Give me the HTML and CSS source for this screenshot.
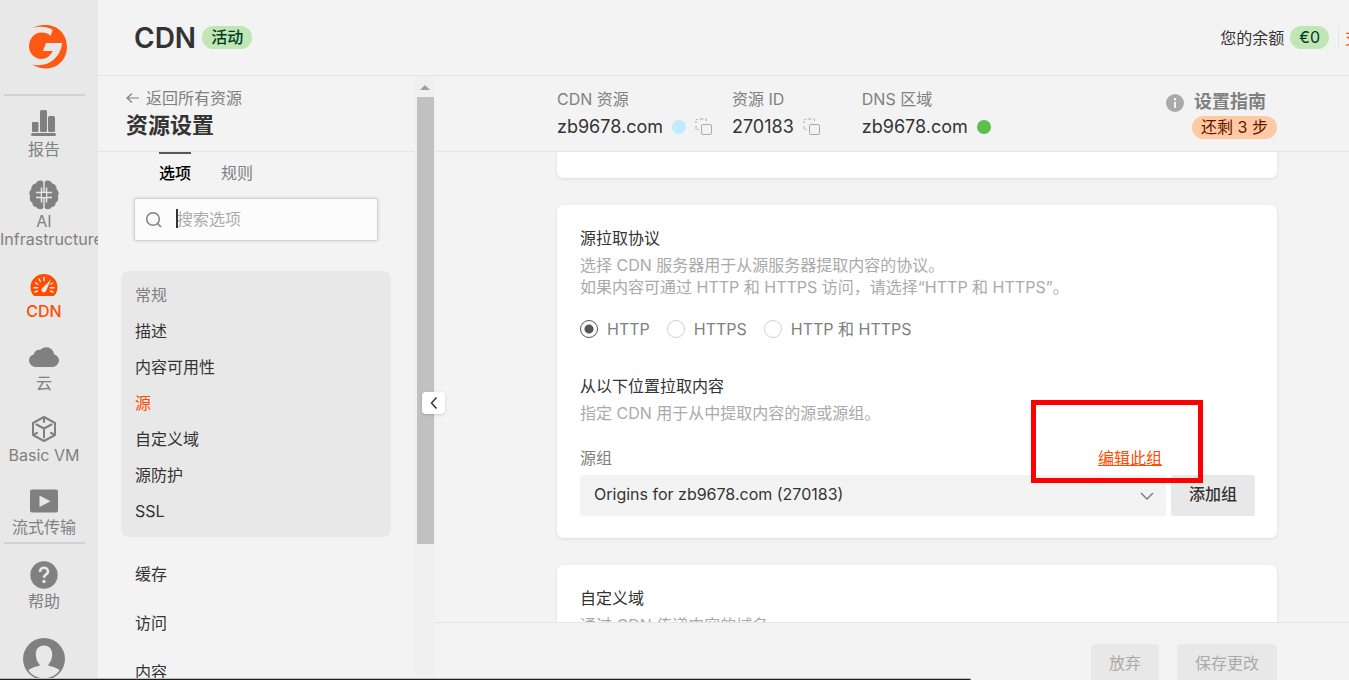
FILE: index.html
```html
<!DOCTYPE html>
<html lang="zh-CN">
<head>
<meta charset="utf-8">
<meta name="viewport" content="width=device-width, initial-scale=1">
<title>CDN 资源设置</title>
<link rel="stylesheet" href="styles.css">
</head>
<body>
<div class="app">
  <aside class="rail">
    <a class="logo" href="#" aria-label="首页">
      <svg width="38" height="44" viewBox="-1 0 38 44">
        <path fill="#ff5913" d="M2.500 3C8 .3 12 0 16 0c12 0 21 9.600 21 21.700S28 43.500 16 43.500c-5 0-9.500-1.300-13.500-4C17 43 30 34 32.300 18H16l-3 8h9.700c-2.200 5-6.500 8-11.200 8C4.500 34-1 28.500-1 21S4.500 7.500 11.500 7.500c3.500 0 6.700 1.200 9.200 3.200l2-5.700C17 1.500 9 1 2.500 3z"/>
      </svg>
    </a>
    <hr class="rail-line">
    <nav class="rail-nav">
      <a class="rail-item" href="#">
        <span class="rail-icon"><svg width="26" height="26" viewBox="0 0 26 26" fill="#808080"><rect x="1" y="12" width="6.500" height="10" rx="1"/><rect x="9" y="0" width="7" height="22" rx="1.500"/><rect x="17" y="6" width="7" height="16" rx="1.500"/><rect x="0" y="23" width="25" height="3" rx="1.500"/></svg></span>
        <span class="rail-label">报告</span>
      </a>
      <a class="rail-item" href="#">
        <span class="rail-icon"><svg width="30" height="30" viewBox="0 0 30 30"><path fill="#808080" d="M14.300 2v26c-2 2-5.500 1.500-7-1C5 27 3.200 25.200 3.400 22.800 1 21.500 0 18.500 1.300 16.300-.3 14 .2 11 2.300 9.500 2 6.500 4 4 6.800 3.600 8.300.3 12.300-.3 14.300 2zM15.700 2v26c2 2 5.500 1.500 7-1 2.300 0 4.100-1.800 3.900-4.200 2.400-1.300 3.400-4.300 2.100-6.500 1.600-2.300 1.100-5.300-1-6.800.3-3-1.700-5.500-4.500-5.900-1.500-3.300-5.500-3.900-7.500-1.600z"/><path fill="none" stroke="#e8e8e8" stroke-width="1.500" d="M7 12.500h16M7 17.500h16M12.500 7.500v15M17.500 7.500v15"/><path fill="#808080" d="M13 13h4v4h-4z"/></svg></span>
        <span class="rail-label">AI Infrastructure</span>
      </a>
      <a class="rail-item active" href="#">
        <span class="rail-icon"><svg width="28" height="24" viewBox="0 0 28 24"><path fill="#ff4c00" d="M14 1C6.500 1 .5 7 .5 14.200c0 3 1 5.800 2.800 8 .4.500 1 .8 1.600.8h18.200c.6 0 1.200-.3 1.600-.8 1.800-2.200 2.800-5 2.800-8C27.500 7 21.500 1 14 1z"/><path stroke="#e8e8e8" stroke-width="1.500" stroke-linecap="round" d="M14 4.500v3M9 6l1.300 2.500M5.500 9.800l2.300 1.500M4 14.700h3.500M24 14.700h-3.500M5 19l2.500-1M23 19l-2.500-1M22.500 10l-1.500 1"/><path fill="#e8e8e8" d="M21 6.500l-4.800 11a2.400 2.400 0 1 1-3.800-2.500z"/></svg></span>
        <span class="rail-label">CDN</span>
      </a>
      <a class="rail-item" href="#">
        <span class="rail-icon"><svg width="30" height="20" viewBox="0 0 30 20"><path fill="#808080" d="M6.500 20a6.500 6.500 0 0 1-1.600-12.800A5 5 0 0 1 11 3 8 8 0 0 1 25 7.200 6.500 6.500 0 0 1 23.500 20z"/></svg></span>
        <span class="rail-label">云</span>
      </a>
      <a class="rail-item" href="#">
        <span class="rail-icon"><svg width="26" height="28" viewBox="0 0 26 28" fill="none" stroke="#808080" stroke-width="2" stroke-linejoin="round" stroke-linecap="round"><path d="M13 2l11 6v12l-11 6-11-6V8zM13 13.500v9M13 13.500L5.500 9.500M13 13.500l7.500-4M13 2v5M2 20l4-2.200M24 20l-4-2.200"/></svg></span>
        <span class="rail-label">Basic VM</span>
      </a>
      <a class="rail-item" href="#">
        <span class="rail-icon"><svg width="28" height="24" viewBox="0 0 28 24"><rect y=".5" width="28" height="23" rx="2" fill="#808080"/><path fill="#e8e8e8" d="M9.500 6.500v11.500l11-5.700z"/></svg></span>
        <span class="rail-label">流式传输</span>
      </a>
    </nav>
    <hr class="rail-line">
    <nav class="rail-nav rail-foot">
      <a class="rail-item" href="#">
        <span class="rail-icon"><svg width="28" height="28" viewBox="0 0 28 28"><circle cx="14" cy="14" r="13.700" fill="#808080"/><path d="M10 11c0-5.500 8-5.500 8-.6 0 3.200-4 3.200-4 6.400" fill="none" stroke="#e8e8e8" stroke-width="2.600"/><circle cx="14" cy="20.500" r="1.700" fill="#e8e8e8"/></svg></span>
        <span class="rail-label">帮助</span>
      </a>
      <a class="avatar" href="#" aria-label="账户"><svg width="42" height="42" viewBox="0 0 42 42"><circle cx="21" cy="21" r="21" fill="#808080"/><path fill="#e8e8e8" d="M21 7.500c5.500 0 8.500 4 8.200 9.500-.2 4-1.500 7.200-3.700 9.300v1.400c4.500 1 8.500 2.300 11.300 4.500A19.500 19.500 0 0 1 5.200 32.200C8 30 12 28.700 16.500 27.700v-1.400c-2.200-2.100-3.500-5.300-3.700-9.300C12.500 11.500 15.500 7.500 21 7.500z"/></svg></a>
    </nav>
  </aside>

  <div class="main">
    <header class="topbar">
      <h1>CDN</h1>
      <span class="pill pill-green">活动</span>
      <div class="balance">
        <span>您的余额</span>
        <span class="pill pill-green">€0</span>
        <a class="pay" href="#">支付</a>
      </div>
    </header>

    <div class="workspace">
      <section class="pane">
        <div class="pane-scroll">
          <div class="pane-head">
            <a class="back" href="#"><svg width="14" height="12" viewBox="0 0 14 12" fill="none" stroke="#808080" stroke-width="1.200"><path d="M13 6H1M6 1.500L1 6l5 4.500"/></svg>返回所有资源</a>
            <h2>资源设置</h2>
          </div>
          <div class="tabs">
            <button class="tab selected" type="button">选项</button>
            <button class="tab" type="button">规则</button>
          </div>
          <div class="search">
            <svg width="18" height="18" viewBox="0 0 18 18" fill="none" stroke="#808080" stroke-width="1.500"><circle cx="8" cy="8" r="6.300"/><path d="M12.500 12.500l3.500 3.500"/></svg>
            <input type="text" placeholder="搜索选项" aria-label="搜索选项">
            <span class="caret"></span>
          </div>
          <nav class="group">
            <span class="group-title">常规</span>
            <a href="#">描述</a>
            <a href="#">内容可用性</a>
            <a class="current" href="#">源</a>
            <a href="#">自定义域</a>
            <a href="#">源防护</a>
            <a href="#">SSL</a>
          </nav>
          <nav class="sections">
            <a href="#">缓存</a>
            <a href="#">访问</a>
            <a href="#">内容</a>
          </nav>
        </div>
        <div class="scrollbar"><span class="arrow-up"></span><span class="thumb"></span></div>
        <button class="collapse" type="button" aria-label="收起"><svg width="8" height="14" viewBox="0 0 8 14" fill="none" stroke="#333" stroke-width="1.500"><path d="M6.500 1.500L1.500 7l5 5.500"/></svg></button>
      </section>

      <section class="content">
        <div class="summary">
          <dl>
            <div><dt>CDN 资源</dt><dd>zb9678.com <i class="dot dot-blue"></i>
              <button class="copy" type="button" aria-label="复制"><svg width="18" height="18" viewBox="0 0 18 18" fill="none" stroke="#aaa"><rect x="6.500" y="6.500" width="10" height="10" rx="1.500"/><path d="M1 11V8M1 5V3M1 1.500h1.500M4.500 1h4M10.500 1h1v2M2 11.500h1.500"/></svg></button></dd></div>
            <div><dt>资源 ID</dt><dd>270183
              <button class="copy" type="button" aria-label="复制"><svg width="18" height="18" viewBox="0 0 18 18" fill="none" stroke="#aaa"><rect x="6.500" y="6.500" width="10" height="10" rx="1.500"/><path d="M1 11V8M1 5V3M1 1.500h1.500M4.500 1h4M10.500 1h1v2M2 11.500h1.500"/></svg></button></dd></div>
            <div><dt>DNS 区域</dt><dd>zb9678.com <i class="dot dot-green"></i></dd></div>
          </dl>
          <div class="guide">
            <svg width="18" height="18" viewBox="0 0 18 18"><circle cx="9" cy="9" r="9" fill="#aaa"/><path fill="#f3f3f3" d="M8 4h2v2.500H8zM8 8h2v6H8z"/></svg>
            <div><strong>设置指南</strong><span class="pill pill-peach">还剩 3 步</span></div>
          </div>
        </div>

        <div class="cards">
          <div class="card card-prev"></div>
          <form class="card">
            <h3>源拉取协议</h3>
            <p>选择 CDN 服务器用于从源服务器提取内容的协议。<br>如果内容可通过 HTTP 和 HTTPS 访问，请选择“HTTP 和 HTTPS”。</p>
            <div class="radios">
              <label><input type="radio" name="protocol" checked>HTTP</label>
              <label><input type="radio" name="protocol">HTTPS</label>
              <label><input type="radio" name="protocol">HTTP 和 HTTPS</label>
            </div>
            <h3>从以下位置拉取内容</h3>
            <p>指定 CDN 用于从中提取内容的源或源组。</p>
            <div class="origin">
              <div class="field">
                <div class="field-head"><label for="origin-group">源组</label><a href="#">编辑此组</a></div>
                <div class="select-box">
                  <select id="origin-group"><option>Origins for zb9678.com (270183)</option></select>
                  <svg width="14" height="8" viewBox="0 0 14 8" fill="none" stroke="#808080" stroke-width="1.500"><path d="M1 1l6 6 6-6"/></svg>
                </div>
              </div>
              <button class="btn" type="button">添加组</button>
            </div>
            <span class="highlight"></span>
          </form>
          <div class="card">
            <h3>自定义域</h3>
            <p>通过 CDN 传递内容的域名。</p>
          </div>
        </div>

        <footer class="actions">
          <button class="btn" type="button" disabled>放弃</button>
          <button class="btn" type="button" disabled>保存更改</button>
        </footer>
      </section>
    </div>
  </div>
  <div class="status-edge"></div>
</div>
</body>
</html>
```
FILE: styles.css
```css
* { box-sizing: border-box; }

body {
  margin: 0;
  background: #f3f3f3;
  color: #333;
  font: 16px/22px Inter, "Noto Sans CJK SC", sans-serif;
}

a { color: inherit; text-decoration: none; }
h1, h2, h3, p, dl, dd { margin: 0; }
button, input, select { font: inherit; color: inherit; margin: 0; }
button { border: 0; background: none; padding: 0; }
svg { display: block; flex: none; }

.app {
  position: relative;
  display: flex;
  height: 100vh;
  overflow: hidden;
}

/* Product rail */
.rail {
  flex: none;
  width: 98px;
  padding-right: 10px;
  overflow: hidden;
  background: #e8e8e8;
  color: #808080;
}
.logo { display: flex; justify-content: center; padding: 25px 0 25px 8px; }
.rail-line { width: 81px; height: 2px; margin: 0 4px; border: 0; background: #d2d2d2; }
.rail-nav { display: flex; flex-direction: column; gap: 22px; padding: 12px 0 6px; }
.rail-foot { gap: 28px; padding-top: 16px; }
.rail-item { display: flex; flex-direction: column; gap: 2px; }
.rail-icon { display: flex; align-items: center; justify-content: center; height: 30px; }
.rail-label { line-height: 18px; text-align: center; }
.active { color: #ff4c00; }
.active .rail-label { font-weight: 500; }
.avatar { align-self: center; }

/* Top bar */
.main { flex: 1; min-width: 0; display: flex; flex-direction: column; }
.topbar {
  display: flex;
  align-items: center;
  gap: 6px;
  flex: none;
  height: 76px;
  padding-left: 36px;
  border-bottom: 1px solid #e5e5e5;
  overflow: hidden;
}
h1 { font-size: 28px; line-height: 36px; font-weight: 600; }
.pill { height: 23px; padding: 0 9px; border-radius: 12px; line-height: 22px; white-space: nowrap; }
.pill-green { background: #bfe6b4; color: #003c1e; }
.topbar > .pill { font-weight: 500; }
.pill-peach { background: #ffc9a3; color: #5f1400; }
.balance { display: flex; align-items: center; gap: 6px; margin-left: auto; white-space: nowrap; line-height: 22px; }
.pay {
  width: 11px;
  margin-left: 3px;
  padding-left: 6px;
  border-left: 1px solid #e5e5e5;
  overflow: hidden;
  color: #ff4c00;
}

/* Settings pane */
.workspace { flex: 1; min-height: 0; display: flex; }
.pane { position: relative; flex: none; display: flex; width: 337px; }
.pane-scroll { flex: 1; overflow: hidden; }
.pane-head { height: 76px; padding: 11px 28px 0; border-bottom: 1px solid #e5e5e5; }
.back { display: flex; align-items: center; gap: 6px; color: #808080; }
h2 { font-size: 22px; line-height: 32px; font-weight: 700; }
.tabs { display: flex; gap: 30px; padding-left: 61px; }
.tab { height: 46px; padding-bottom: 6px; color: #808080; border-top: 2px solid transparent; }
.tab.selected { color: #000; font-weight: 500; border-color: #555; }
.search {
  position: relative;
  display: flex;
  align-items: center;
  gap: 14px;
  width: 244px;
  height: 43px;
  margin: 0 0 30px 36px;
  padding: 0 10px;
  background: #fcfcfc;
  border: 1px solid #d2d2d2;
  border-radius: 3px;
  box-shadow: 0 0 0 2px #e8e8e8;
}
.search input { flex: 1; min-width: 0; padding: 0 0 2px; border: 0; background: none; outline: 0; }
.search input::placeholder { color: #aaa; opacity: 1; }
.caret { position: absolute; left: 41px; top: 10px; width: 2px; height: 19px; background: #333; }
.group {
  display: flex;
  flex-direction: column;
  margin: 0 24px 13px 23px;
  padding: 6px 14px 8px;
  line-height: 36px;
  background: #e8e8e8;
  border-radius: 8px;
}
.group-title { color: #808080; }
.group .current { color: #ff4c00; }
.sections { display: flex; flex-direction: column; padding-left: 37px; line-height: 49px; }
.scrollbar {
  display: flex;
  flex-direction: column;
  align-items: center;
  flex: none;
  width: 20px;
  background: #f0f0f0;
}
.arrow-up {
  margin: 9px 0 7px;
  border: 5px solid transparent;
  border-top: 0;
  border-bottom-color: #a0a0a0;
}
.thumb { flex: 0 0 74%; width: 17px; margin-left: 1px; background: #c1c1c1; }
.collapse {
  position: absolute;
  z-index: 2;
  right: -10px;
  top: 316px;
  display: flex;
  align-items: center;
  justify-content: center;
  width: 23px;
  height: 22px;
  background: #fff;
  border-radius: 4px;
  box-shadow: 0 1px 3px rgba(0, 0, 0, .15);
}

/* Content */
.content { flex: 1; min-width: 0; display: flex; flex-direction: column; }
.summary {
  display: flex;
  justify-content: space-between;
  flex: none;
  height: 76px;
  padding: 12px 72px 0 122px;
  border-bottom: 1px solid #e5e5e5;
}
dl { display: flex; white-space: nowrap; }
dl > div + div { margin-left: 19px; }
dl > div:last-child { margin-left: 41px; }
dt { color: #808080; }
dd { display: flex; align-items: center; gap: 9px; font-size: 18px; line-height: 34px; }
.dot { width: 14px; height: 14px; border-radius: 50%; }
.dot-blue { background: #bfecff; }
.dot-green { background: #5bbf4a; }
.guide { display: flex; gap: 8px; color: #808080; white-space: nowrap; }
.guide svg { margin-top: 6px; }
.guide div { display: flex; flex-direction: column; }
.guide strong { padding-left: 2px; font-size: 18px; line-height: 28px; }
.cards {
  flex: 1;
  min-height: 0;
  display: flex;
  flex-direction: column;
  gap: 27px;
  padding: 0 72px 0 122px;
  overflow: hidden;
}
.card {
  position: relative;
  flex: none;
  padding: 21px 22px 22px 23px;
  background: #fff;
  border-radius: 6px;
  box-shadow: 0 1px 3px rgba(0, 0, 0, .1);
}
.card-prev { padding: 13px; border-radius: 0 0 6px 6px; }
h3 { margin-bottom: 4px; font-size: 16px; line-height: 24px; font-weight: 400; }
.card p { color: #aaa; }
.radios { display: flex; gap: 17px; margin: 19px 0 33px; color: #808080; }
.radios label { display: flex; align-items: center; gap: 9px; line-height: 24px; }
.radios input {
  appearance: none;
  width: 18px;
  height: 18px;
  border: 1px solid #d2d2d2;
  border-radius: 50%;
  background: #fff;
}
.radios input:checked {
  border-color: #555;
  background: radial-gradient(circle, #555 4px, #fff 5px);
}
.origin { display: flex; align-items: flex-end; gap: 5px; margin-top: 23px; }
.field { flex: 1; min-width: 0; }
.field-head { display: flex; justify-content: space-between; padding-right: 4px; margin-bottom: 6px; color: #808080; }
.field-head a { color: #ff4c00; text-decoration: underline; }
.select-box { position: relative; }
select {
  display: block;
  appearance: none;
  width: 100%;
  height: 41px;
  padding: 0 36px 3px 14px;
  border: 0;
  border-radius: 3px;
  background: #f3f3f3;
}
.select-box svg { position: absolute; right: 12px; top: 17px; pointer-events: none; }
.btn { flex: none; height: 41px; padding: 0 18px 3px; border-radius: 3px; background: #e8e8e8; font-weight: 500; }
.btn:disabled { color: #aaa; font-weight: 400; }
.highlight {
  position: absolute;
  right: 74px;
  top: 195px;
  width: 172px;
  height: 83px;
  border: 5px solid #f00;
}
.actions {
  display: flex;
  justify-content: flex-end;
  align-items: flex-start;
  gap: 18px;
  flex: none;
  height: 58px;
  padding: 21px 72px 0;
  border-top: 1px solid #e5e5e5;
  overflow: hidden;
}

/* Top edge of the browser's status bubble */
.status-edge {
  position: absolute;
  left: 0;
  bottom: 0;
  width: 72%;
  height: 2px;
  background: #1e1e1e;
  border-top: 1px solid #bbb;
  border-radius: 0 2px 0 0;
}
```
